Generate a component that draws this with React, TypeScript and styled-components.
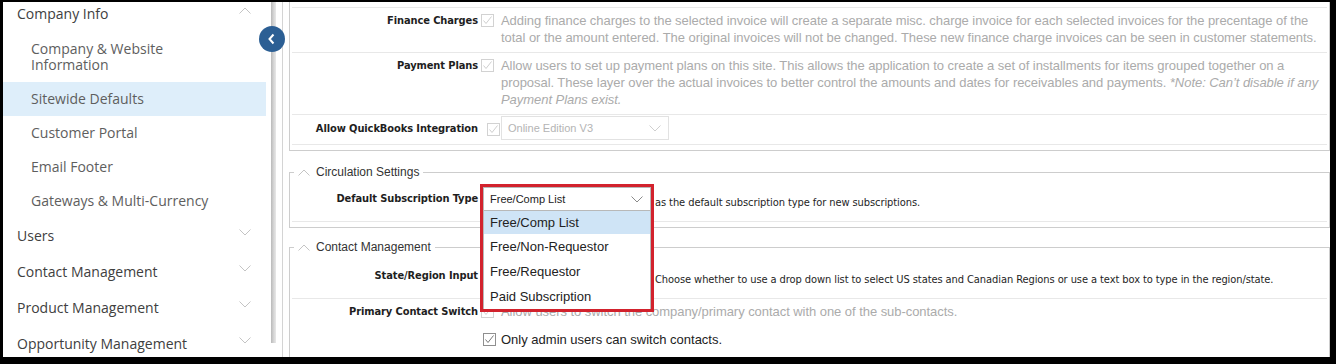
import React from 'react'
import styled, { createGlobalStyle } from 'styled-components'

const GlobalStyle = createGlobalStyle`
  html, body {
    margin: 0;
    padding: 0;
    background: #000;
  }
  * {
    box-sizing: border-box;
  }
`

const Frame = styled.div`
  position: relative;
  width: 1336px;
  height: 364px;
  border-style: solid;
  border-color: #000;
  border-width: 2px 6px 7px 3px;
  background: #fff;
  display: flex;
  overflow: hidden;
`

/* ---------- sidebar ---------- */

const Sidebar = styled.nav`
  width: 267px;
  flex: none;
  overflow: hidden;
  font-family: 'Open Sans', sans-serif;
  font-size: 14px;
`

const NavList = styled.div`
  display: flex;
  flex-direction: column;
  margin-top: -7px;
`

const Section = styled.div`
  height: 36px;
  display: flex;
  align-items: center;
  justify-content: space-between;
  padding: 0 19px 0 14px;
  color: #404040;

  svg {
    margin-top: -5px;
  }
`

const SubItem = styled.div<{ $active?: boolean }>`
  margin-right: 4px;
  padding: 9px 50px 9px 28px;
  line-height: 16px;
  color: #5e5e5e;
  background: ${p => (p.$active ? '#deeefa' : 'transparent')};

  &:nth-child(2) {
    padding-top: 10px;
  }

  &:nth-child(6) {
    padding-bottom: 8px;
  }
`

const ScrollTrack = styled.div`
  width: 7px;
  flex: none;
  padding-left: 1px;
`

const ScrollThumb = styled.div`
  width: 5px;
  height: 341px;
  background: linear-gradient(to right, #b9b9b9, #d6d6d6 55%, #e8e8e8);
`

const CollapseButton = styled.button`
  position: absolute;
  left: 256px;
  top: 24px;
  width: 26px;
  height: 26px;
  padding: 0;
  border: none;
  border-radius: 50%;
  background: #2c5f94;
  display: grid;
  place-items: center;
  z-index: 4;
`

/* ---------- settings ---------- */

const Main = styled.main`
  flex: 1;
  min-width: 0;
  margin-left: 5px;
  border-left: 1px solid #d4d4d4;
  padding-left: 6px;
  display: flex;
  flex-direction: column;
  gap: 12px;
  font-family: 'Liberation Sans', Arial, sans-serif;
  font-size: 13px;
  color: #222;
`

const Panel = styled.section`
  border: 1px solid #cdcdcd;
  border-top: none;
  padding: 5px 2px;
  margin-bottom: 2px;
`

const RowList = styled.div`
  border-top: 1px solid #e8e8e8;
`

const Row = styled.div<{ $pad?: string; $center?: boolean; $last?: boolean }>`
  display: grid;
  grid-template-columns: 186px 1fr;
  column-gap: 3px;
  align-items: ${p => (p.$center ? 'center' : 'start')};
  padding: ${p => p.$pad ?? '4px 0 6px'};
  border-bottom: ${p => (p.$last ? 'none' : '1px solid #e8e8e8')};
`

const Label = styled.div<{ $tall?: boolean }>`
  font-family: 'DejaVu Sans Condensed', 'DejaVu Sans', sans-serif;
  font-stretch: condensed;
  font-weight: bold;
  font-size: 11px;
  letter-spacing: -0.1px;
  line-height: ${p => (p.$tall ? 24 : 17)}px;
  text-align: right;
  color: #1e1e1e;
`

const Field = styled.div<{ $gap?: number; $indent?: number; $center?: boolean }>`
  display: flex;
  align-items: ${p => (p.$center ? 'center' : 'flex-start')};
  gap: ${p => p.$gap ?? 7}px;
  padding-left: ${p => p.$indent ?? 0}px;
`

const Stack = styled.div`
  display: flex;
  flex-direction: column;
  gap: 11px;
`

const Hint = styled.p`
  margin: 0;
  color: #ababab;
  font-size: 13px;
  letter-spacing: -0.05px;
  line-height: 17px;

  em {
    font-style: italic;
  }
`

const Text = styled.span`
  font-size: 13px;
  line-height: 17px;
  color: #222;
`

const Note = styled.span`
  margin-top: 9px;
  font-family: 'DejaVu Sans Condensed', 'DejaVu Sans', sans-serif;
  font-stretch: condensed;
  font-size: 11px;
  letter-spacing: -0.08px;
  line-height: 14px;
  color: #1e1e1e;
  white-space: nowrap;
`

const Box = styled.span<{ $dark?: boolean }>`
  flex: none;
  width: 13px;
  height: 13px;
  margin-top: 2px;
  border: 1px solid ${p => (p.$dark ? '#8f8f8f' : '#d2d2d2')};
  background: #fff;
  display: grid;
  place-items: center;
`

const Group = styled.fieldset`
  margin: 0;
  min-width: 0;
  border: 1px solid #cdcdcd;
  padding: 0 2px 5px;
`

const Legend = styled.legend`
  margin-left: 2px;
  padding: 0 4px;
  display: flex;
  align-items: center;
  gap: 6px;
  font-size: 12px;
  line-height: 14px;
  color: #333;
`

const SelectWrap = styled.div`
  position: relative;
  flex: none;
  margin-left: 2px;
`

const SelectBox = styled.div<{ $disabled?: boolean }>`
  width: 168px;
  height: 24px;
  border: 1px solid ${p => (p.$disabled ? '#e2e2e2' : '#b8b8b8')};
  background: #fff;
  display: flex;
  align-items: center;
  justify-content: space-between;
  padding: 0 7px 0 6px;
  font-size: 11px;
  color: ${p => (p.$disabled ? '#b4b4b4' : '#222')};
`

const DropList = styled.ul`
  position: absolute;
  top: 100%;
  left: 0;
  width: 168px;
  margin: 0;
  padding: 0;
  list-style: none;
  background: #fff;
  border: 1px solid #b8b8b8;
  border-top: none;
  z-index: 2;
`

const Option = styled.li<{ $active?: boolean }>`
  height: 25px;
  padding-left: 6px;
  display: flex;
  align-items: center;
  font-size: 13px;
  color: #222;
  background: ${p => (p.$active ? '#cfe4f6' : 'transparent')};

  &:first-child {
    height: 23px;
  }
`

const Highlight = styled.div`
  position: absolute;
  left: -3px;
  top: -3px;
  width: 174px;
  height: 128px;
  border: 3px solid #d2222d;
  pointer-events: none;
  z-index: 3;
`

/* ---------- bits ---------- */

const Chevron = ({ up, color = '#c4c4c4' }: { up?: boolean; color?: string }) => (
  <svg width="12" height="7" viewBox="0 0 12 7" fill="none" stroke={color} strokeWidth="1">
    <polyline points={up ? '0.5,6.5 6,1 11.5,6.5' : '0.5,0.5 6,6 11.5,0.5'} />
  </svg>
)

const Check = ({ dark }: { dark?: boolean }) => (
  <Box $dark={dark}>
    <svg width="11" height="11" viewBox="0 0 11 11">
      <polyline
        points="1.5,5.5 4,8.5 9.5,1.5"
        fill="none"
        stroke={dark ? '#777' : '#cfcfcf'}
        strokeWidth="1"
      />
    </svg>
  </Box>
)

const Select = ({ value, disabled }: { value: string; disabled?: boolean }) => (
  <SelectBox $disabled={disabled}>
    <span>{value}</span>
    <Chevron color={disabled ? '#cfcfcf' : '#8a8a8a'} />
  </SelectBox>
)

const subscriptionTypes = ['Free/Comp List', 'Free/Non-Requestor', 'Free/Requestor', 'Paid Subscription']

const App = () => (
  <>
    <GlobalStyle />
    <Frame>
      <Sidebar>
        <NavList>
          <Section>
            Company Info
            <Chevron up />
          </Section>
          <SubItem>Company &amp; Website Information</SubItem>
          <SubItem $active>Sitewide Defaults</SubItem>
          <SubItem>Customer Portal</SubItem>
          <SubItem>Email Footer</SubItem>
          <SubItem>Gateways &amp; Multi-Currency</SubItem>
          <Section>
            Users
            <Chevron />
          </Section>
          <Section>
            Contact Management
            <Chevron />
          </Section>
          <Section>
            Product Management
            <Chevron />
          </Section>
          <Section>
            Opportunity Management
            <Chevron />
          </Section>
        </NavList>
      </Sidebar>
      <ScrollTrack>
        <ScrollThumb />
      </ScrollTrack>
      <CollapseButton aria-label="Collapse menu">
        <svg width="10" height="12" viewBox="0 0 10 12" fill="none" stroke="#fff" strokeWidth="2">
          <polyline points="6.5,1.5 2.5,6 6.5,10.5" />
        </svg>
      </CollapseButton>

      <Main>
        <Panel>
          <RowList>
            <Row>
              <Label>Finance Charges</Label>
              <Field>
                <Check />
                <Hint>
                  Adding finance charges to the selected invoice will create a separate misc. charge invoice for
                  each selected invoices for the precentage of the total or the amount entered. The original
                  invoices will not be changed. These new finance charge invoices can be seen in customer
                  statements.
                </Hint>
              </Field>
            </Row>
            <Row>
              <Label>Payment Plans</Label>
              <Field>
                <Check />
                <Hint>
                  Allow users to set up payment plans on this site. This allows the application to create a set of
                  installments for items grouped together on a proposal. These layer over the actual invoices to
                  better control the amounts and dates for receivables and payments.{' '}
                  <em>*Note: Can’t disable if any Payment Plans exist.</em>
                </Hint>
              </Field>
            </Row>
            <Row $center $pad="1px 0 4px">
              <Label>Allow QuickBooks Integration</Label>
              <Field $center $gap={1} $indent={6}>
                <Check />
                <Select value="Online Edition V3" disabled />
              </Field>
            </Row>
          </RowList>
        </Panel>

        <Group>
          <Legend>
            <Chevron up />
            Circulation Settings
          </Legend>
          <Row $pad="8px 0 10px">
            <Label $tall>Default Subscription Type</Label>
            <Field $gap={4}>
              <SelectWrap>
                <Select value="Free/Comp List" />
                <DropList>
                  {subscriptionTypes.map((t, i) => (
                    <Option key={t} $active={i === 0}>
                      {t}
                    </Option>
                  ))}
                </DropList>
                <Highlight />
              </SelectWrap>
              <Note>as the default subscription type for new subscriptions.</Note>
            </Field>
          </Row>
        </Group>

        <Group>
          <Legend>
            <Chevron up />
            Contact Management
          </Legend>
          <Row $pad="10px 0 10px">
            <Label $tall>State/Region Input</Label>
            <Field $gap={4}>
              <SelectWrap>
                <Select value="" />
              </SelectWrap>
              <Note>
                Choose whether to use a drop down list to select US states and Canadian Regions or use a text box
                to type in the region/state.
              </Note>
            </Field>
          </Row>
          <Row $pad="4px 0 6px" $last>
            <Label>Primary Contact Switch</Label>
            <Stack>
              <Field>
                <Check />
                <Hint>Allow users to switch the company/primary contact with one of the sub-contacts.</Hint>
              </Field>
              <Field $gap={5} $indent={2}>
                <Check dark />
                <Text>Only admin users can switch contacts.</Text>
              </Field>
            </Stack>
          </Row>
        </Group>
      </Main>
    </Frame>
  </>
)

export default App
